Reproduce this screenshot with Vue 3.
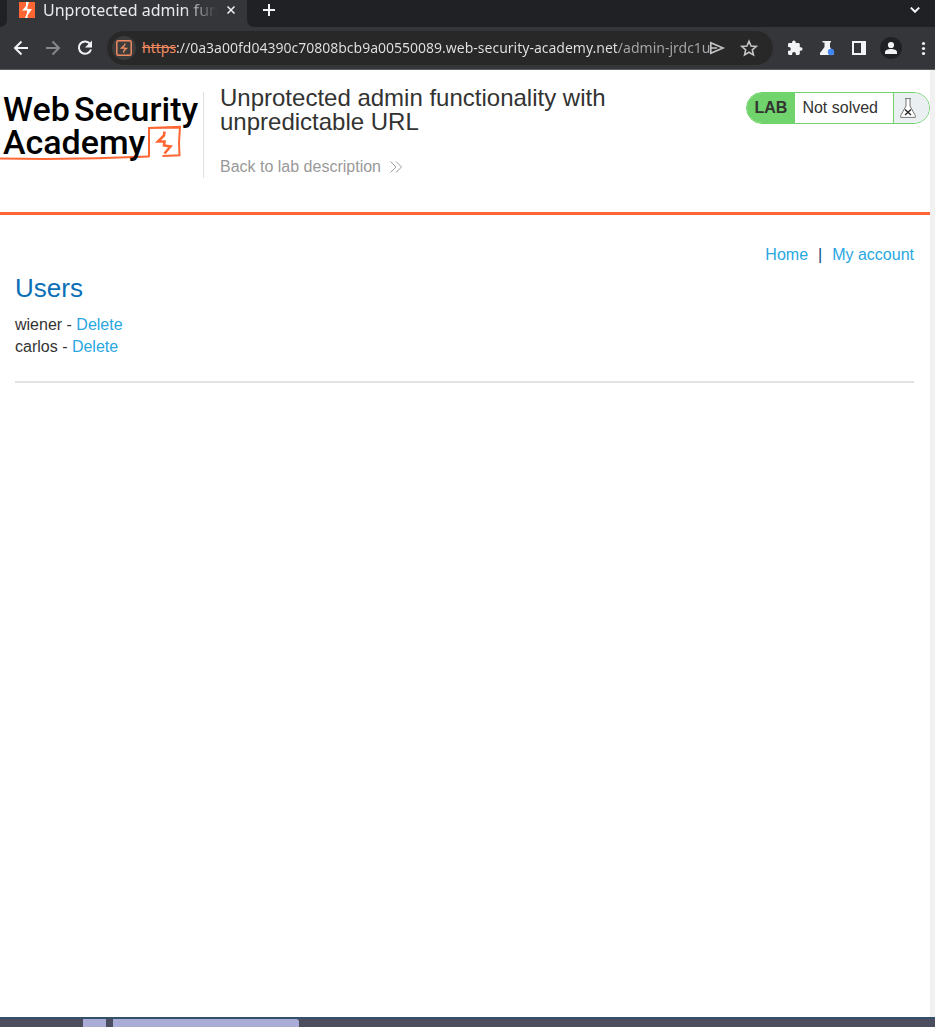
<script setup>
import { ref } from 'vue'

const address = ref('://0a3a00fd04390c70808bcb9a00550089.web-security-academy.net/admin-jrdc1u')
const users = ['wiener', 'carlos']
</script>

<template>
  <div class="window">
    <header class="tab-strip">
      <div class="tab-edge left"></div>
      <div class="tab">
        <svg class="favicon" width="16" height="16" viewBox="0 0 16 16" aria-hidden="true">
          <rect width="16" height="16" fill="#ff6633" />
          <path d="M7 0v4L3 8.500h5v2.500L6 16h2.500v-2.500L13 7H8.500V4.500L10 0z" fill="#fff" />
        </svg>
        <span class="tab-title">Unprotected admin fun</span>
        <button class="tab-close" aria-label="Close tab">
          <svg width="8" height="8" viewBox="0 0 8 8"><path d="M.5.5l7 7M7.500.5l-7 7" /></svg>
        </button>
      </div>
      <div class="tab-edge right"></div>
      <button class="new-tab" aria-label="New tab">
        <svg width="12" height="12" viewBox="0 0 12 12"><path d="M6 0v12M0 6h12" /></svg>
      </button>
      <button class="tab-search" aria-label="Search tabs">
        <svg width="10" height="6" viewBox="0 0 10 6"><path d="M.8.6L5 4.800 9.200.6" /></svg>
      </button>
    </header>

    <div class="toolbar">
      <button class="tool" aria-label="Back">
        <svg width="24" height="24" viewBox="0 0 24 24"><path class="line" d="M19 12H6M12.500 5.500L6 12l6.500 6.500" /></svg>
      </button>
      <button class="tool dim" aria-label="Forward">
        <svg width="24" height="24" viewBox="0 0 24 24"><path class="line" d="M5 12h13M11.500 5.500L18 12l-6.500 6.500" /></svg>
      </button>
      <button class="tool" aria-label="Reload">
        <svg width="24" height="24" viewBox="0 0 24 24"><path class="line" d="M17.300 8.200A6.200 6.200 0 1 0 18 13.500" /><path class="fill" d="M19 4.500v7h-7z" /></svg>
      </button>
      <form class="omnibox" @submit.prevent>
        <button class="site-info" type="button" aria-label="Site information">
          <svg width="16" height="16" viewBox="0 0 16 16" fill="none" stroke="#f28b62">
            <rect x=".8" y=".8" width="14.400" height="14.400" rx="1.500" stroke-width="1.500" />
            <path d="M8.800 3.500v1.500L5.500 8h2.800v.3h2.200L7.700 11v1.800" stroke-width="1.300" />
          </svg>
        </button>
        <label class="scheme" for="address"><s>https</s></label>
        <input id="address" v-model="address" class="address" type="text" aria-label="Address" spellcheck="false" />
        <button class="tool muted send" type="button" aria-label="Send page">
          <svg width="19" height="24" viewBox="5 0 19 24" fill="none" stroke="currentColor" stroke-width="1.600"><path d="M5.800 6.800L18 12 5.800 17.200zM6 12h6" /></svg>
        </button>
        <button class="tool muted" type="button" aria-label="Bookmark this page">
          <svg width="24" height="24" viewBox="0 0 24 24" fill="none" stroke="currentColor" stroke-width="1.600"><path d="M12 5.300l2.050 4.750 5.150.45-3.900 3.400 1.150 5.050L12 16.300l-4.450 2.650L8.700 13.900l-3.900-3.400 5.150-.45z" /></svg>
        </button>
      </form>
      <button class="tool" aria-label="Extensions">
        <svg width="24" height="24" viewBox="0 0 24 24"><path class="fill" d="M17.800 11.300h-1V8.400c0-.8-.6-1.400-1.400-1.400h-2.700V6.200a1.800 1.800 0 0 0-3.600 0V7H6.300C5.500 7 5 7.600 5 8.400V11h.9a1.900 1.900 0 0 1 0 3.800H5v2.700c0 .8.6 1.400 1.400 1.400h2.700V18a1.900 1.900 0 0 1 3.800 0v.9h2.500c.8 0 1.400-.6 1.400-1.400v-2.700h1a1.700 1.700 0 0 0 0-3.500z" /></svg>
      </button>
      <button class="tool" aria-label="Testing tools">
        <svg width="24" height="24" viewBox="0 0 24 24"><path class="fill" d="M7.500 5h8.500v1.500h-1V11l3.500 6v2H5v-2l4.500-6V6.500h-2z" /><circle cx="16" cy="16" r="3.200" fill="#4285f4" /></svg>
      </button>
      <button class="tool" aria-label="Side panel">
        <svg width="24" height="24" viewBox="0 0 24 24"><path class="fill" fill-rule="evenodd" d="M5 5h14v14H5zM7 7v10h7V7z" /></svg>
      </button>
      <button class="tool" aria-label="Profile">
        <svg width="24" height="24" viewBox="0 0 24 24"><circle cx="12" cy="12" r="11" fill="#202124" /><circle class="fill" cx="12" cy="9" r="3.100" /><path class="fill" d="M6 18v-1.800c0-2 3-3.200 6-3.200s6 1.200 6 3.200V18z" /></svg>
      </button>
      <button class="tool" aria-label="Browser menu">
        <svg width="24" height="24" viewBox="0 0 24 24"><g class="fill"><circle cx="12.500" cy="7.500" r="1.600" /><circle cx="12.500" cy="12.500" r="1.600" /><circle cx="12.500" cy="17.500" r="1.600" /></g></svg>
      </button>
    </div>

    <div class="viewport">
      <div class="page">
        <header class="lab-header">
          <a class="logo" href="#" aria-label="Web Security Academy">
            <svg width="203" height="72" viewBox="0 0 203 72">
              <g fill="none" stroke="#ff6633">
                <path d="M0 66.500Q75 68 149 64.500" stroke-width="2" />
                <path d="M149 65V36l31-1.200-1 16 .5 12.500-17 .7M149 36l31-.5" stroke-width="2" />
                <path d="M164.500 39.500l-.5 4-6 6h6.500l-.5 4 6.500 1-6 7" stroke-width="2.600" />
              </g>
              <g class="logo-text">
                <text x="3" y="29">Web</text>
                <text x="74" y="29">Security</text>
                <text x="3" y="62">Academy</text>
              </g>
            </svg>
          </a>
          <div class="title-block">
            <h1>Unprotected admin functionality with unpredictable URL</h1>
            <a class="back" href="#">Back to lab description
              <svg width="12" height="12" viewBox="0 0 12 12"><path d="M.5.5L6 6 .5 11.500M6 .5L11.500 6 6 11.500" /></svg>
            </a>
          </div>
          <div class="status">
            <span class="lab">LAB</span>
            <span class="state">Not solved</span>
            <span class="flask">
              <svg width="16" height="20" viewBox="0 0 16 20" fill="none" aria-hidden="true">
                <path d="M5 .6h6M6 1v7L.7 17.500v1.900h14.600v-1.900L10 8V1" fill="#fff" stroke="#777" />
                <path d="M5 11.500l6 5.500M11 11.500L5 17" stroke="#222" stroke-width="1.300" />
              </svg>
            </span>
          </div>
        </header>

        <main>
          <nav>
            <a href="#">Home</a>
            <span class="divider">|</span>
            <a href="#">My account</a>
          </nav>
          <section>
            <h2>Users</h2>
            <div v-for="user in users" :key="user" class="user">
              <span>{{ user }} - </span><a href="#">Delete</a>
            </div>
          </section>
          <hr />
        </main>
      </div>
      <div class="scrollbar"></div>
    </div>

    <footer class="desktop">
      <div class="block small"></div>
      <div class="block large"></div>
    </footer>
  </div>
</template>

<style>
body {
  margin: 0;
}
</style>

<style scoped>
.window {
  display: flex;
  flex-direction: column;
  height: 100vh;
  overflow: hidden;
  background: #fff;
  color: #333332;
  font: 16px/22px "Liberation Sans", Arial, sans-serif;
}

button {
  display: flex;
  align-items: center;
  justify-content: center;
  flex: none;
  padding: 0;
  border: 0;
  background: none;
  color: #f1f3f4;
}

svg {
  display: block;
}

.tab-strip {
  display: flex;
  flex: none;
  height: 27px;
  background: #35363a;
}

.tab-edge {
  flex: none;
  background: #202124;
}

.tab-edge.left {
  width: 7px;
  border-bottom-right-radius: 7px;
}

.tab-edge.right {
  width: 8px;
  border-bottom-left-radius: 7px;
}

.tab {
  display: flex;
  flex: none;
  align-items: center;
  box-sizing: border-box;
  width: 240px;
  padding: 0 8px 7px 12px;
}

.favicon {
  flex: none;
}

.tab-title {
  width: 174px;
  margin-left: 8px;
  overflow: hidden;
  white-space: nowrap;
  color: #e8eaed;
  font: 16px/20px "Noto Sans", sans-serif;
  -webkit-mask-image: linear-gradient(to right, #000 140px, transparent 174px);
  mask-image: linear-gradient(to right, #000 140px, transparent 174px);
}

.tab-close {
  width: 16px;
  height: 16px;
  margin-left: 6px;
}

.tab-strip button svg {
  fill: none;
  stroke: #f1f3f4;
  stroke-width: 2;
}

.tab-strip .tab-close svg {
  stroke-width: 1.5;
}

.new-tab,
.tab-search {
  box-sizing: border-box;
  height: 27px;
  padding-bottom: 7px;
  background: #202124;
}

.new-tab {
  width: 28px;
}

.tab-search {
  flex: 1;
  justify-content: flex-end;
  padding-right: 15px;
}

.toolbar {
  display: flex;
  flex: none;
  align-items: center;
  gap: 8px;
  box-sizing: border-box;
  height: 43px;
  padding-left: 9px;
  border-bottom: 1px solid #5d5e61;
  background: #35363a;
}

.tool {
  width: 24px;
  height: 24px;
}

.tool .fill {
  fill: currentColor;
}

.tool .line {
  fill: none;
  stroke: currentColor;
  stroke-width: 2;
}

.dim {
  color: #86878a;
}

.muted {
  color: #c4c5c7;
}

.omnibox {
  display: flex;
  flex: 1;
  align-items: center;
  box-sizing: border-box;
  min-width: 0;
  height: 34px;
  margin: 0 2px;
  padding: 0 12px 0 5px;
  border-radius: 17px;
  background: #282828;
  font: 14px/20px "Noto Sans", sans-serif;
}

.site-info {
  width: 24px;
  height: 24px;
  border-radius: 50%;
  background: #3c3c3c;
}

.scheme {
  margin-left: 6px;
  color: #f28b62;
}

.address {
  flex: 1;
  min-width: 0;
  padding: 0;
  border: 0;
  outline: 0;
  background: linear-gradient(to right, #e2e3e5 441px, #a6a8ab 441px) text;
  color: transparent;
  font: inherit;
}

.send {
  width: 19px;
}

.omnibox .muted + .muted {
  margin-left: 8px;
}

.viewport {
  display: flex;
  flex: 1;
  min-height: 0;
}

.page {
  flex: 1;
  min-width: 0;
}

.scrollbar {
  flex: none;
  width: 5px;
  background: #f1f1f1;
}

.lab-header {
  display: flex;
  align-items: flex-start;
  box-sizing: border-box;
  height: 145px;
  padding-top: 22px;
  border-bottom: 3px solid #ff6633;
}

.logo {
  flex: none;
  height: 86px;
  border-right: 1px solid #e0e0e0;
}

.logo-text {
  fill: #000;
  font: 500 34px Roboto, "Liberation Sans", sans-serif;
}

.title-block {
  flex: 1;
  min-width: 0;
  padding: 0 100px 0 16px;
}

h1 {
  margin: -6px 0 0;
  font-size: 24px;
  font-weight: 400;
  line-height: 24px;
}

.back {
  display: flex;
  align-items: center;
  gap: 9px;
  margin-top: 22px;
  color: #999;
}

.back svg {
  fill: none;
  stroke: #999;
}

a {
  color: #29a7df;
  text-decoration: none;
}

.status {
  display: flex;
  flex: none;
  box-sizing: border-box;
  height: 32px;
  overflow: hidden;
  border: 1px solid #70d36c;
  border-radius: 16px;
  line-height: 30px;
}

.lab {
  padding: 0 8px;
  background: #70d36c;
  font-weight: 700;
}

.state {
  padding: 0 15px 0 7px;
  border-right: 1px solid #70d36c;
}

.flask {
  display: flex;
  align-items: center;
  padding: 0 13px 0 6px;
  background: #eaeff2;
}

main {
  padding: 29px 16px 0 15px;
}

nav {
  display: flex;
  justify-content: flex-end;
  gap: 10px;
}

.divider {
  color: #0b4a7c;
}

h2 {
  margin: 7px 0 11px;
  color: #0b6fb8;
  font-size: 26px;
  font-weight: 400;
  line-height: 30px;
}

.user {
  white-space: pre-wrap;
}

hr {
  margin: 23px 0 0;
  border: 0;
  border-top: 2px solid #e3e3e3;
}

.desktop {
  display: flex;
  flex: none;
  gap: 7px;
  height: 8px;
  padding-left: 83px;
  border-top: 2px solid #34506a;
  background: #4c4e60;
}

.block {
  background: #aaacd8;
}

.small {
  width: 23px;
}

.large {
  width: 186px;
  border-top-right-radius: 3px;
}
</style>
